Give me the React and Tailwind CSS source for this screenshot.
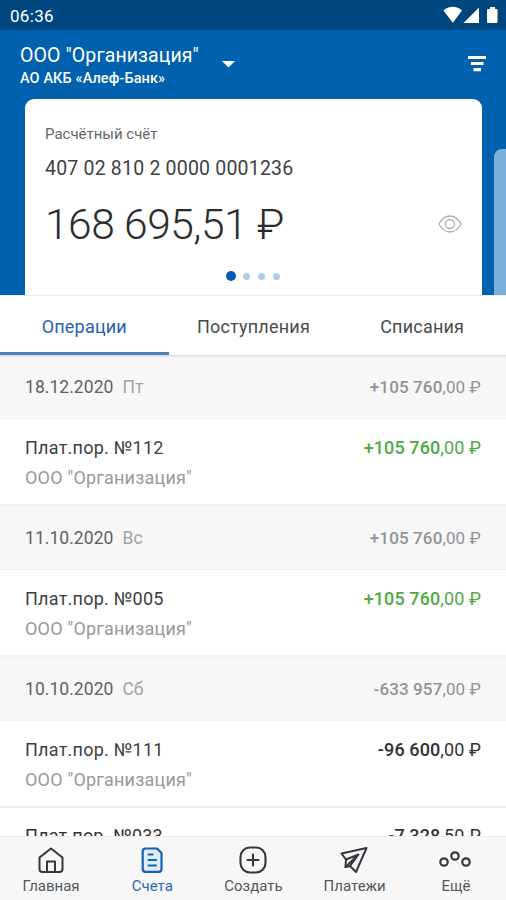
const groups = [
  { date: '18.12.2020', day: 'Пт', total: '+105 760', cents: ',00', doc: 'Плат.пор. №112', sum: '+105 760', sumCents: ',00', income: true },
  { date: '11.10.2020', day: 'Вс', total: '+105 760', cents: ',00', doc: 'Плат.пор. №005', sum: '+105 760', sumCents: ',00', income: true },
  { date: '10.10.2020', day: 'Сб', total: '-633 957', cents: ',00', doc: 'Плат.пор. №111', sum: '-96 600', sumCents: ',00', income: false },
];

function StatusBar() {
  return (
    <div className="flex h-[30px] shrink-0 items-center justify-between bg-[#00467f] pl-[10px] pr-[7px] text-white">
      <span className="pt-[2px] text-[17px] leading-none tracking-[0.3px]">06:36</span>
      <svg width="56" height="18" viewBox="0 0 56 18" fill="currentColor">
        <path d="M0.5 4.5C6-.4 13.5-.4 19 4.5L9.8 16.8Z" />
        <path d="M36 1.5V17H20.500Z" />
        <path d="M44 4q0-1 1-1h2V1h5v2h1.500q1 0 1 1v12q0 1-1 1H45q-1 0-1-1Z" />
      </svg>
    </div>
  );
}

function Header() {
  return (
    <header className="flex h-[265px] shrink-0 flex-col overflow-hidden bg-[#0061af]">
      <div className="flex h-[69px] shrink-0 items-start pl-5 pr-5 text-white">
        <div className="pt-[14px]">
          <div className="whitespace-nowrap text-[19.500px] leading-6 tracking-[0.1px]">ООО "Организация"</div>
          <div className="whitespace-nowrap text-[14.500px] font-medium leading-[21px] tracking-[0.1px]">АО АКБ «Алеф-Банк»</div>
        </div>
        <svg className="ml-[23px] mt-[31px]" width="13" height="7" viewBox="0 0 13 7" fill="currentColor"><path d="M0 0h13L6.500 6.500Z" /></svg>
        <svg className="ml-auto mt-[26px]" width="18" height="16" viewBox="0 0 18 16" fill="currentColor">
          <path d="M0 0h18v3H0zM3 6h12.500v3H3zM5.500 12H13v3.300H5.500z" />
        </svg>
      </div>
      <div className="flex grow">
        <section className="ml-[25px] flex w-[457px] shrink-0 flex-col rounded-t-[9px] bg-white px-5">
          <div className="mt-[25px] text-[15px] leading-5 text-[#63676b]">Расчётный счёт</div>
          <div className="mt-[13px] text-[19.500px] leading-6 tracking-[0.2px] text-[#3e4145]">407 02 810 2 0000 0001236</div>
          <div className="mt-[20px] flex items-center justify-between leading-[47px]">
            <span className="text-[42.500px] font-light tracking-[-0.5px] text-[#2a2c2e]">168 695,51 ₽</span>
            <svg className="mb-[2px]" width="24" height="18" viewBox="0 0 24 18" fill="none" stroke="#a3b1bc" strokeWidth="1.300">
              <path d="M.8 9C4 3.500 8 1 12 1s8 2.500 11.200 8C20 14.500 16 17 12 17S4 14.500.8 9Z" />
              <circle cx="12" cy="9" r="4.500" />
            </svg>
          </div>
          <div className="mt-[23px] flex items-center justify-center gap-2 pr-px">
            <i className="size-[10px] rounded-full bg-[#0759b0]" />
            <i className="-ml-[1px] size-[7px] rounded-full bg-[#abcde8]" />
            <i className="size-[7px] rounded-full bg-[#abcde8]" />
            <i className="size-[7px] rounded-full bg-[#abcde8]" />
          </div>
        </section>
        <div className="ml-[12px] mt-[50px] w-[20px] shrink-0 rounded-tl-[8px] bg-[#7bb0da]" />
      </div>
    </header>
  );
}

function Tabs() {
  return (
    <nav className="relative z-10 grid h-[60px] shrink-0 grid-cols-3 border-t border-[#ededee] bg-white text-center text-[18px] leading-[61px] tracking-[0.2px] text-[#4a4b4d] shadow-[0_1px_2px_rgba(0,0,0,0.18)]">
      <span className="h-[59px] border-b-[3px] border-[#4f80bd] text-[#2561b0]">Операции</span>
      <span className="pl-px">Поступления</span>
      <span className="pl-px">Списания</span>
    </nav>
  );
}

function Group({ g }) {
  return (
    <>
      <div className="flex h-[64px] shrink-0 items-center justify-between border-b border-[#f0f0f0] bg-[#f7f7f7] px-[25px] pt-[2px] text-[17.500px]">
        <span className="tracking-[0.05px] text-[#5f6164]">{g.date}<span className="ml-[9px] text-[#a0a3a6]">{g.day}</span></span>
        <span className="text-[17px] tracking-[0.12px] text-[#909396]"><span className="font-medium">{g.total}</span>{g.cents} ₽</span>
      </div>
      <div className="flex h-[87px] shrink-0 justify-between border-b-2 border-[#f1f1f2] bg-white px-[25px] pt-[14px] text-[18px] leading-[30px]">
        <div>
          <div className="tracking-[0.25px] text-[#3c3e41]">{g.doc}</div>
          <div className="tracking-[0.2px] text-[#97999c]">ООО "Организация"</div>
        </div>
        <span className={g.income ? 'tracking-[0.1px] text-[#4faa43]' : 'tracking-[0.1px] text-[#303235]'}><span className="font-medium">{g.sum}</span>{g.sumCents} ₽</span>
      </div>
    </>
  );
}

const HomeIcon = () => (
  <svg width="26" height="26" viewBox="0 0 26 26" fill="none" stroke="currentColor" strokeWidth="2" strokeLinejoin="round">
    <path d="M1.500 10.500 13 1.500l11.500 9V22q0 3-3 3h-17q-3 0-3-3Z" />
    <path d="M9 25V14.500h8V25" />
  </svg>
);
const AccountsIcon = () => (
  <svg width="26" height="26" viewBox="0 0 26 26" fill="#dcecf9" stroke="currentColor" strokeWidth="2.200" strokeLinejoin="round">
    <path d="M6.500 1.500H18l4.500 4.500V22q0 2.800-2.800 2.800H6.500Q3.700 24.800 3.700 22V4.300q0-2.800 2.800-2.800Z" />
    <path d="M9.500 7.500h4M9.500 13h7.500M9.500 18.500h7.500" strokeLinecap="round" />
  </svg>
);
const CreateIcon = () => (
  <svg width="28" height="28" viewBox="0 0 28 28" fill="none" stroke="currentColor" strokeWidth="2.100">
    <rect x="1.500" y="1.500" width="25" height="25" rx="9.500" />
    <path d="M14 8.500v11M8.500 14h11" strokeLinecap="round" />
  </svg>
);
const PayIcon = () => (
  <svg width="28" height="28" viewBox="0 0 28 28" fill="none" stroke="currentColor" strokeWidth="2" strokeLinejoin="round" strokeLinecap="round">
    <path d="M26.500 2 1.500 7.500l4.500 6-.5 7.500 4.500-1 6 6Z" />
    <path d="M6 13.500 18.500 8.500 10 20M18.500 8.500 5.500 21" />
  </svg>
);
const MoreIcon = () => (
  <svg width="34" height="26" viewBox="0 0 34 26" fill="none" stroke="currentColor" strokeWidth="2.200">
    <circle cx="6" cy="15" r="3.700" /><circle cx="17" cy="9" r="3.700" /><circle cx="28" cy="15" r="3.700" />
  </svg>
);

const items = [
  ['Главная', HomeIcon],
  ['Счета', AccountsIcon],
  ['Создать', CreateIcon],
  ['Платежи', PayIcon],
  ['Ещё', MoreIcon],
];

export default function App() {
  return (
    <div className="flex h-[900px] w-[506px] flex-col overflow-hidden bg-white font-['Roboto','Noto_Sans',sans-serif]">
      <StatusBar />
      <Header />
      <Tabs />
      <main className="flex min-h-0 grow flex-col overflow-hidden">
        {groups.map((g) => <Group key={g.date} g={g} />)}
        <div className="flex shrink-0 justify-between px-[25px] pt-[13px] text-[18px] leading-[30px] text-[#303235]">
          <span className="tracking-[0.2px]">Плат.пор. №033</span>
          <span className="tracking-[0.1px]"><span className="font-medium">-7 328</span>,50 ₽</span>
        </div>
      </main>
      <footer className="grid h-[64px] shrink-0 grid-cols-5 border-t border-[#ececec] bg-[#f7f7f7] text-[15px] text-[#54575b]">
        {items.map(([label, Icon]) => (
          <div key={label} className={label === 'Счета' ? 'flex flex-col items-center text-[#2767b8]' : 'flex flex-col items-center'}>
            <span className={label === 'Счета' ? 'flex h-[40px] items-center pt-[6px] text-[#1762b4]' : 'flex h-[40px] items-center pt-[6px] text-[#34373d]'}><Icon /></span>
            <span className="pl-px leading-[19px]">{label}</span>
          </div>
        ))}
      </footer>
    </div>
  );
}
